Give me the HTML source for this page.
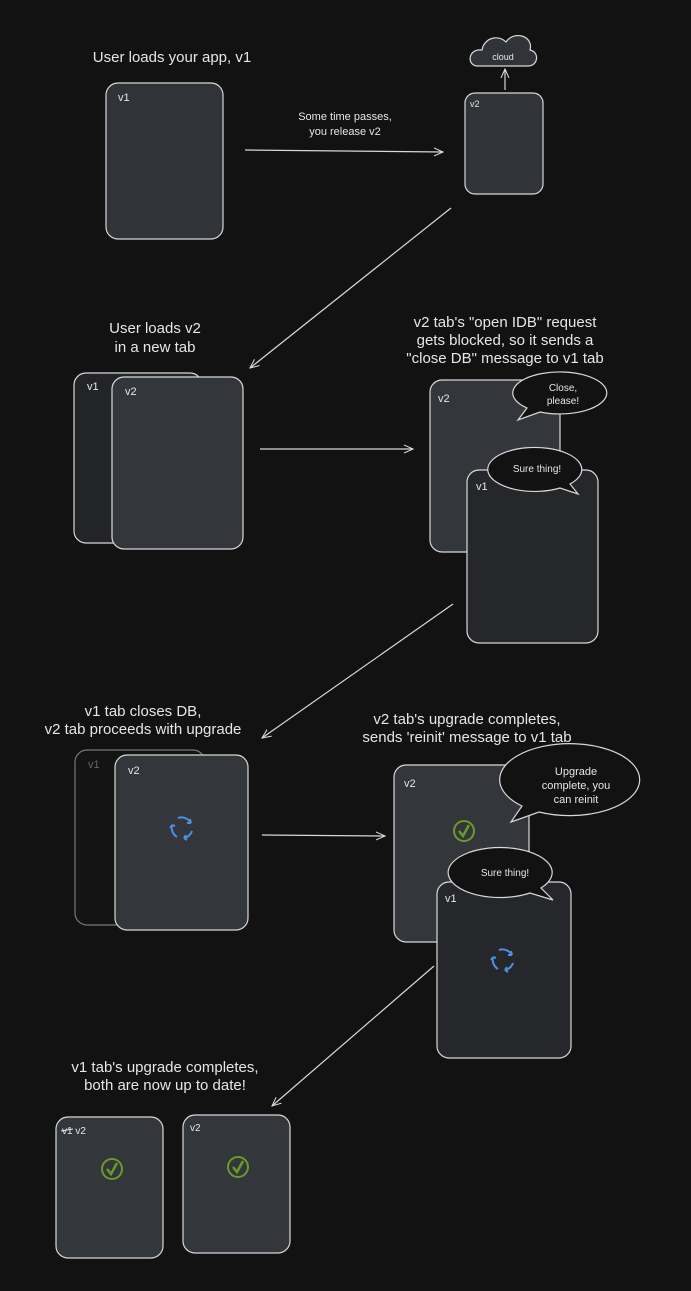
<!DOCTYPE html>
<html><head><meta charset="utf-8"><style>
html,body{margin:0;padding:0;background:#121212;}
svg{display:block}
text{font-family:"Liberation Sans",sans-serif;fill:#e6e6e6}
</style></head><body>
<svg width="691" height="1291" viewBox="0 0 691 1291" xmlns="http://www.w3.org/2000/svg">
<defs>
<marker id="ah" markerWidth="10" markerHeight="10" refX="9" refY="5" orient="auto" markerUnits="userSpaceOnUse">
<path d="M0,1 L9,5 L0,9" fill="none" stroke="#ddd" stroke-width="1"/></marker>
<g id="spin" fill="none" stroke="#4a8fe0" stroke-width="2">
<path d="M-4,-10 A11,11 0 0 1 9,-5"/><path d="M10,3 A11,11 0 0 1 2,10"/><path d="M-5,9 A11,11 0 0 1 -10,-3"/>
<path d="M9,-5 l-1,-4 M9,-5 l-4,0" /><path d="M2,10 l3,2 M2,10 l2,-3"/><path d="M-10,-3 l-2,3 M-10,-3 l3,1"/>
</g>
<g id="chk"><circle r="10" fill="none" stroke="#6a9a2a" stroke-width="2"/><path d="M-5,0 L-1,5 L5,-6" fill="none" stroke="#6a9a2a" stroke-width="2.5"/></g>
</defs>
<rect width="691" height="1291" fill="#121212"/>
<g stroke="#d8d8d8" stroke-width="1.2">
<rect x="106" y="83" width="117" height="156" rx="12" fill="#303338"/>
<rect x="465" y="93" width="78" height="101" rx="10" fill="#303338"/>
<path d="M478,66 C466,66 468,48 482,50 C484,38 498,34 506,42 C514,30 534,36 530,50 C540,52 538,66 528,66 Z" fill="#303338"/>
<line x1="245" y1="150" x2="443" y2="152" marker-end="url(#ah)"/>
<line x1="505" y1="90" x2="505" y2="69" marker-end="url(#ah)"/>
<line x1="451" y1="208" x2="250" y2="368" marker-end="url(#ah)"/>
<rect x="74" y="373" width="128" height="170" rx="12" fill="#232427"/>
<rect x="112" y="377" width="131" height="172" rx="12" fill="#33363b"/>
<line x1="260" y1="449" x2="413" y2="449" marker-end="url(#ah)"/>
<rect x="430" y="380" width="130" height="172" rx="12" fill="#33363b"/>
<path d="M527,408 A47,21 0 1 1 540,412 L518,420 Z" fill="#121212"/>
<rect x="467" y="470" width="131" height="173" rx="12" fill="#25272a"/>
<path d="M570,484 A47,22 0 1 0 560,488 L578,494 Z" fill="#121212"/>
<line x1="453" y1="604" x2="262" y2="738" marker-end="url(#ah)"/>
<rect x="75" y="750" width="130" height="175" rx="12" fill="#141414" stroke="#777"/>
<rect x="115" y="755" width="133" height="175" rx="12" fill="#33363b"/>
<line x1="262" y1="835" x2="385" y2="836" marker-end="url(#ah)"/>
<rect x="394" y="765" width="135" height="177" rx="12" fill="#33363b"/>
<path d="M522,806 A70,36 0 1 1 539,812 L511,822 Z" fill="#121212"/>
<rect x="437" y="882" width="134" height="176" rx="12" fill="#25272a"/>
<path d="M541,888 A52,25 0 1 0 530,893 L553,900 Z" fill="#121212"/>
<line x1="434" y1="966" x2="272" y2="1106" marker-end="url(#ah)"/>
<rect x="56" y="1117" width="107" height="141" rx="12" fill="#33363b"/>
<rect x="183" y="1115" width="107" height="138" rx="12" fill="#33363b"/>
</g>
<use href="#spin" x="182" y="828"/>
<use href="#spin" x="503" y="960"/>
<use href="#chk" x="464" y="831"/>
<use href="#chk" x="112" y="1169"/>
<use href="#chk" x="238" y="1167"/>
<g font-size="15" text-anchor="middle">
<text x="172" y="62">User loads your app, v1</text>
<text x="155" y="333">User loads v2</text><text x="155" y="352">in a new tab</text>
<text x="505" y="327">v2 tab's "open IDB" request</text><text x="505" y="345">gets blocked, so it sends a</text><text x="505" y="363">"close DB" message to v1 tab</text>
<text x="143" y="716">v1 tab closes DB,</text><text x="143" y="734">v2 tab proceeds with upgrade</text>
<text x="467" y="724">v2 tab's upgrade completes,</text><text x="467" y="742">sends 'reinit' message to v1 tab</text>
<text x="165" y="1072">v1 tab's upgrade completes,</text><text x="165" y="1090">both are now up to date!</text>
</g>
<g font-size="11" text-anchor="middle">
<text x="345" y="120">Some time passes,</text><text x="345" y="135">you release v2</text>
<text x="503" y="60" font-size="9">cloud</text>
<text x="563" y="391" font-size="10">Close,</text><text x="563" y="404" font-size="10">please!</text>
<text x="537" y="472" font-size="10">Sure thing!</text>
<text x="576" y="775">Upgrade</text><text x="576" y="789">complete, you</text><text x="576" y="803">can reinit</text>
<text x="505" y="876" font-size="10">Sure thing!</text>
</g>
<g font-size="11">
<text x="118" y="101">v1</text>
<text x="470" y="107" font-size="9">v2</text>
<text x="87" y="390">v1</text>
<text x="125" y="395">v2</text>
<text x="438" y="402">v2</text>
<text x="476" y="490">v1</text>
<text x="88" y="768" style="fill:#666">v1</text>
<text x="128" y="774">v2</text>
<text x="404" y="787">v2</text>
<text x="445" y="902">v1</text>
<text x="62" y="1134" font-size="10">v1 v2</text>
<text x="190" y="1131" font-size="10">v2</text>
</g>
<line x1="61" y1="1131" x2="73" y2="1129" stroke="#e6e6e6" stroke-width="1"/>
</svg>
</body></html>
